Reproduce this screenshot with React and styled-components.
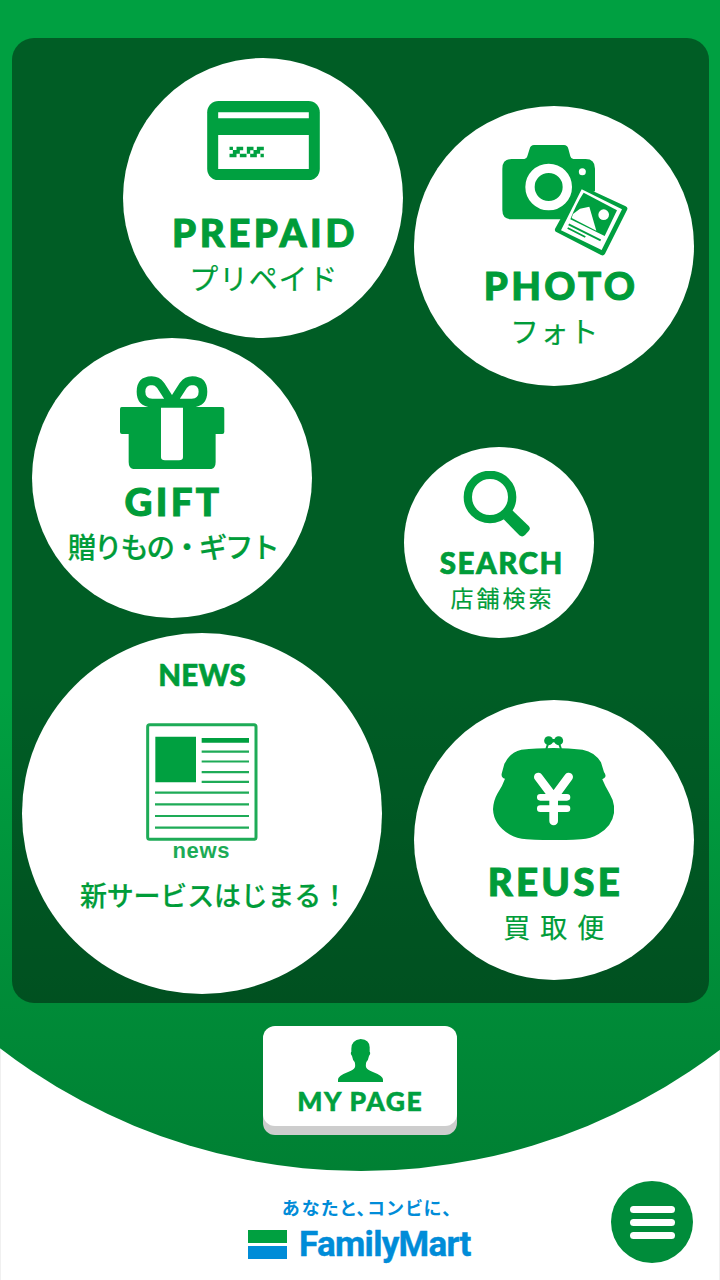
import styled, { createGlobalStyle, ThemeProvider } from 'styled-components'

const theme = {
  colorBrand: '#00a040',
  colorTitle: '#009c39',
  colorBlue: '#008cd8',
  colorMenu: '#008c3a',
  fontTitle: 'Lato, "Liberation Sans", sans-serif',
  fontJapanese: '"Noto Sans CJK JP", sans-serif',
}

const GlobalStyle = createGlobalStyle`
  body {
    margin: 0;
    background: #fff;
  }
`

const Screen = styled.div`
  position: relative;
  box-sizing: border-box;
  width: 720px;
  height: 1280px;
  overflow: hidden;
  background: #fff;
  box-shadow: inset 1px 0 #f0f0f0, inset -1px 0 #f0f0f0;
`

// Green area that ends in an arc at the bottom
const Stage = styled.main`
  position: relative;
  z-index: 0;
  box-sizing: border-box;
  display: flex;
  flex-direction: column;
  align-items: center;
  height: 1170.5px;
  padding-top: 37.5px;

  &::before {
    content: '';
    position: absolute;
    z-index: -1;
    top: 0;
    bottom: 0;
    left: -231px;
    width: 1184px;
    border-radius: 0 0 592px 592px;
    background: linear-gradient(#00a041 0, #00a041 690px, #008033 1170px);
  }
`

const Panel = styled.nav`
  box-sizing: border-box;
  display: flex;
  width: 697.5px;
  height: 965px;
  padding: 20px 0 0 10.3px;
  margin-left: 0.5px;
  border-radius: 22px;
  background: rgba(0, 0, 0, 0.42);
`

const Column = styled.div`
  display: flex;
  flex-direction: column;
  width: ${(p) => p.$width};
`

const Bubble = styled.a`
  box-sizing: border-box;
  flex: none;
  display: flex;
  flex-direction: column;
  align-items: center;
  width: ${(p) => p.$size}px;
  height: ${(p) => p.$size}px;
  padding-top: ${(p) => p.$inset}px;
  margin: ${(p) => p.$margin};
  border-radius: 50%;
  background: #fff;
  color: ${(p) => p.theme.colorTitle};

  svg {
    flex: none;
    display: block;
    fill: ${(p) => p.theme.colorBrand};
  }
`

// Some drawings sit off the centre of their bubble
const IconWrap = styled.div`
  padding: ${(p) => p.$padding};
`

// The negative margin takes the trailing letter space out of the centering
const Title = styled.span`
  font-family: ${(p) => p.theme.fontTitle};
  font-weight: 900;
  font-size: ${(p) => p.$size || 38.5}px;
  line-height: 1;
  letter-spacing: ${(p) => p.$spacing}px;
  margin-top: ${(p) => p.$top}px;
  margin-right: ${(p) => -p.$spacing}px;
  margin-left: ${(p) => p.$shift || 0}px;
  white-space: nowrap;
  -webkit-text-stroke: ${(p) => p.$stroke ?? 1}px;
`

const Caption = styled(Title)`
  font-family: ${(p) => p.theme.fontJapanese};
  font-weight: ${(p) => p.$weight || 400};
  -webkit-text-stroke: 0.2px;
`

const PaperLabel = styled(Title)`
  font-family: 'Liberation Sans', sans-serif;
  font-weight: 700;
  color: #1cab56;
  -webkit-text-stroke: 0;
`

const MyPageButton = styled.a`
  box-sizing: border-box;
  display: flex;
  flex-direction: column;
  align-items: center;
  width: 194px;
  height: 100px;
  padding-top: 13.5px;
  margin-top: 23px;
  border-radius: 12px;
  background: #fff;
  box-shadow: 0 9px #cdcdcd;
  color: ${(p) => p.theme.colorBrand};

  svg {
    display: block;
    fill: ${(p) => p.theme.colorBrand};
  }
`

const Footer = styled.footer`
  display: flex;
  justify-content: flex-end;
  padding: 10.5px 27px 0 0;
`

const Brand = styled.div`
  display: flex;
  flex-direction: column;
  width: 226px;
  margin: 15px 137px 0 0;
  color: ${(p) => p.theme.colorBlue};
`

const Slogan = styled.span`
  margin-left: 34px;
  font-family: ${(p) => p.theme.fontJapanese};
  font-weight: 700;
  font-size: 18px;
  line-height: 22px;
  letter-spacing: 1.9px;
  font-feature-settings: 'palt';
  white-space: nowrap;
`

const BrandRow = styled.div`
  display: flex;
  margin-top: 8px;
`

const Flag = styled.div`
  width: 39px;
  height: 13px;
  margin-top: 4px;
  background: ${(p) => p.theme.colorBrand};
  box-shadow: 0 16px ${(p) => p.theme.colorBlue};
`

const BrandName = styled.span`
  margin: 1px 0 0 12px;
  font-family: Roboto, sans-serif;
  font-weight: 700;
  font-size: 35px;
  line-height: 35px;
  letter-spacing: -0.7px;
  -webkit-text-stroke: 0.4px;
`

const MenuButton = styled.button`
  display: flex;
  flex-direction: column;
  align-items: center;
  justify-content: center;
  gap: 6px;
  width: 82px;
  height: 82px;
  padding: 0;
  border: 0;
  border-radius: 50%;
  background: ${(p) => p.theme.colorMenu};
`

const MenuBar = styled.span`
  width: 45px;
  height: 7px;
  border-radius: 4px;
  background: #fff;
`

const CardIcon = () => (
  <svg width="113" height="79.300" viewBox="264 153 338 238">
    <rect x="264" y="153" width="338" height="238" rx="34" />
    <path fill="#fff" d="M297 187h272v18H297zM297 255h272v102H297z" />
    <path d="M331 290h10.300v10.300h-10.300zM352 290h20v10.600h-20zM383 290h20v10.600h-20zM413 290h21v10.600h-21zM341 300h21v11h-21zM383 300h10v11h-10zM403 300h20v11h-20zM331 311h21v11h-21zM362 311h20v11h-20zM393 311h20v11h-20zM424 311h10v11h-10z" />
  </svg>
)

const CameraIcon = () => (
  <svg width="126" height="111" viewBox="275 135 378 333">
    <path d="M304 177h38q7 0 9-8l7-23q3-11 13-11h90q10 0 13 11l6 23q2 8 9 8h37q28 0 28 29v152H304q-28 0-28-28V206q0-29 28-29z" />
    <circle cx="415" cy="261" r="56" fill="none" stroke="#fff" strokeWidth="28" />
    <circle cx="516" cy="215" r="10.500" fill="#fff" />
    <path fill="#fff" d="M553 272v90H447z" />
    <path d="M503 262q4-7 12-4l131 61q8 4 4 11l-66 131q-4 8-12 4l-134-69q-7-4-3-11z" />
    <path fill="#fff" d="M514 268l121 60-61 122-122-59z" />
    <path d="M520 278l100 53-37 77-103-50q18-47 40-80z" />
    <path fill="#fff" d="M484 354l4-12 21-16 28-6 21 72z" />
    <circle cx="580" cy="344" r="16" fill="#fff" />
    <path fill="none" stroke="#00a040" strokeWidth="5.500" d="M475 373l96 48M472 384l53 27" />
  </svg>
)

const GiftIcon = () => (
  <svg width="104.300" height="93.300" viewBox="273 122 313 280">
    <path
      fill="none"
      stroke="#00a040"
      strokeWidth="26"
      strokeLinejoin="round"
      d="M429 203H369q-33-2-33-34 0-32 32-33 16 0 27 14zM429 203h60q33-2 33-34 0-32-32-33-16 0-27 14z"
    />
    <path d="M278 215h302q6 0 6 6v69q0 6-6 6h-20v84q0 22-20 22H320q-21 0-21-22v-84h-20q-6 0-6-6v-69q0-6 5-6z" />
    <path fill="#fff" d="M396 217h66v148q0 10-12 10h-42q-12 0-12-10z" />
  </svg>
)

const SearchIcon = () => (
  <svg width="67" height="66" viewBox="189 92 201 198">
    <circle cx="270" cy="170" r="66.500" fill="none" stroke="#00a040" strokeWidth="25" />
    <path d="M336 209l50 48q7 7 0 15l-11 12q-8 8-17 1l-47-48z" />
  </svg>
)

const PaperIcon = () => (
  <svg width="112" height="118" viewBox="376 279 336 354">
    <rect x="381" y="284" width="325" height="344" rx="6" fill="none" stroke="#1eab57" strokeWidth="9" />
    <path d="M404 320h122v137H404zM543 324h142v14H543z" />
    <path
      fill="none"
      stroke="#1eab57"
      strokeWidth="6.500"
      d="M543 365h142M543 394.500h142M543 426.500h142M543 455.500h142M403 488h282M403 523h282M403 558h282M403 593h282"
    />
  </svg>
)

const PurseIcon = () => (
  <svg width="121.300" height="104" viewBox="251 122 364 312">
    <circle cx="418" cy="136" r="13.500" />
    <circle cx="448" cy="136" r="13.500" />
    <path d="M426 131h14v10h-14z" />
    <path fill="none" stroke="#00a040" strokeWidth="6" d="M416 146l-5 15M450 146l5 15" />
    <path d="M433 158q46 0 87 5 37 7 55 38l9 29q9 13 1 18l-6 4q8 20 22 43 13 21 14 47-1 48-48 75-22 13-52 15-78 5-163 0-30-2-52-15-47-28-49-75 1-26 13-47 16-24 23-45-12-2-10-15l8-29q16-35 51-43 44-5 97-5z" />
    <path
      fill="none"
      stroke="#fff"
      strokeLinecap="round"
      strokeLinejoin="round"
      strokeWidth="26"
      d="M387 245l46 61 45-61M433 306v71"
    />
    <path fill="none" stroke="#fff" strokeLinecap="round" strokeWidth="20" d="M393 306h80M393 340h80" />
  </svg>
)

const PersonIcon = () => (
  <svg width="45" height="43" viewBox="264 71 135 129">
    <path d="M332 71q29 2 27 29v9q4 6-2 13-2 12-8 18-3 12 0 17 3 6 18 12 32 12 32 24v7H264v-7q0-12 32-24 15-6 18-12 3-5 0-17-6-6-8-18-6-7-2-13v-9q0-26 28-29z" />
  </svg>
)

const App = () => (
  <ThemeProvider theme={theme}>
    <GlobalStyle />
    <Screen>
      <Stage>
        <Panel>
          <Column $width="382px">
            <Bubble $size={280} $inset={43.5} $margin="0 0 0 101.500px">
              <IconWrap $padding="0 0 0 1px">
                <CardIcon />
              </IconWrap>
              <Title $spacing={3.5} $top={32.7}>PREPAID</Title>
              <Caption $size={29} $spacing={0.8} $top={11.5}>プリペイド</Caption>
            </Bubble>
            <Bubble $size={280} $inset={38.5} $margin="0 0 0 10px">
              <IconWrap $padding="0 0 0 1.500px">
                <GiftIcon />
              </IconWrap>
              <Title $spacing={3.3} $top={12.5}>GIFT</Title>
              <Caption $size={28.5} $weight={500} $spacing={-2.3} $top={12} $shift={4}>贈りもの・ギフト</Caption>
            </Bubble>
            <Bubble $size={360.5} $inset={27} $margin="15.500px 0 0">
              <Title $size={29.5} $spacing={0.2} $top={0} $stroke={0.6}>NEWS</Title>
              <IconWrap $padding="33.500px 1px 0 0">
                <PaperIcon />
              </IconWrap>
              <PaperLabel $size={22} $spacing={0.7} $top={-1} $shift={-2}>news</PaperLabel>
              <Caption $size={27} $weight={500} $spacing={-0.2} $top={19} $shift={24}>新サービスはじまる！</Caption>
            </Bubble>
          </Column>
          <Column $width="290px">
            <Bubble $size={280} $inset={39} $margin="48.500px 0 0 10px">
              <IconWrap $padding="0 0 0 22px">
                <CameraIcon />
              </IconWrap>
              <Title $spacing={3.3} $top={10} $shift={11}>PHOTO</Title>
              <Caption $size={29} $spacing={0.8} $top={11} $shift={1}>フォト</Caption>
            </Bubble>
            <Bubble $size={190.5} $inset={23.5} $margin="61px 0 0">
              <IconWrap $padding="0 5px 0 0">
                <SearchIcon />
              </IconWrap>
              <Title $size={29.5} $spacing={1.5} $top={11} $shift={4} $stroke={0.7}>SEARCH</Title>
              <Caption $size={23} $spacing={3} $top={8.5} $shift={4}>店舗検索</Caption>
            </Bubble>
            <Bubble $size={280} $inset={36} $margin="62px 0 0 10px">
              <PurseIcon />
              <Title $spacing={3.3} $top={22}>REUSE</Title>
              <Caption $size={27} $spacing={10} $top={12.5}>買取便</Caption>
            </Bubble>
          </Column>
        </Panel>
        <MyPageButton>
          <PersonIcon />
          <Title $size={26.5} $spacing={1.5} $top={6} $shift={-1} $stroke={0.5}>MY PAGE</Title>
        </MyPageButton>
      </Stage>
      <Footer>
        <Brand>
          <Slogan>あなたと、コンビに、</Slogan>
          <BrandRow>
            <Flag />
            <BrandName>FamilyMart</BrandName>
          </BrandRow>
        </Brand>
        <MenuButton aria-label="menu">
          <MenuBar />
          <MenuBar />
          <MenuBar />
        </MenuButton>
      </Footer>
    </Screen>
  </ThemeProvider>
)

export default App
